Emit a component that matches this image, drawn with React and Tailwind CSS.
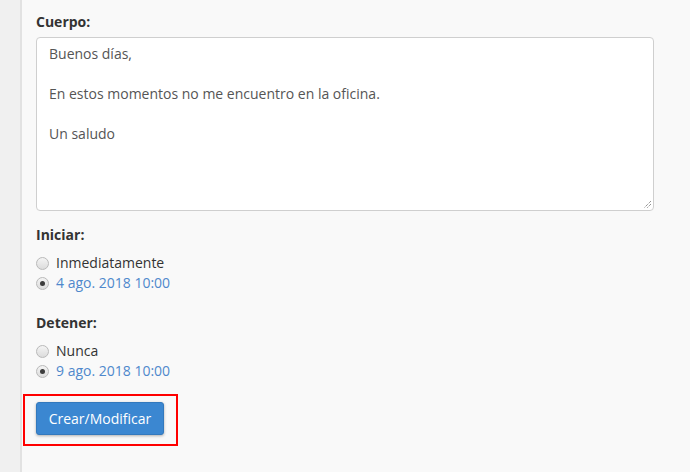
import React from 'react';

function Radio({ checked }) {
  return (
    <span className="inline-flex w-[13px] h-[13px] rounded-full border border-[#b9b9b9] bg-gradient-to-b from-[#f4f4f4] to-[#dcdcdc] items-center justify-center shrink-0">
      {checked && <span className="w-[5px] h-[5px] rounded-full bg-[#3c3c3c]" />}
    </span>
  );
}

function Option({ label, checked, link }) {
  return (
    <label className="flex items-center h-[20px] gap-[7px]">
      <Radio checked={checked} />
      <span className={link ? 'text-[#4f88cc]' : 'text-[#333]'}>{label}</span>
    </label>
  );
}

export default function App() {
  return (
    <div
      className="flex min-h-[472px] w-[690px] bg-[#f9f9f9] text-[14px] leading-[20px] text-[#333]"
      style={{ fontFamily: '"Open Sans", "Liberation Sans", sans-serif' }}
    >
      <div className="w-[22px] shrink-0 bg-[#f0f0f0] border-r-2 border-[#e2e2e2]" />
      <div className="pl-[14px] pt-[12px] flex flex-col">
        <div className="font-bold mb-[5px]">Cuerpo:</div>
        <div className="w-[618px] h-[174px] bg-white border border-[#cfcfcf] rounded-[4px] px-[12px] py-[6px] text-[#555] relative">
          <div>Buenos días,</div>
          <div>&nbsp;</div>
          <div>En estos momentos no me encuentro en la oficina.</div>
          <div>&nbsp;</div>
          <div>Un saludo</div>
          <svg className="absolute right-[1px] bottom-[1px]" width="10" height="10" viewBox="0 0 10 10">
            <path d="M9 2 L2 9 M9 5 L5 9" stroke="#666" strokeWidth="1" strokeDasharray="1 1" />
          </svg>
        </div>

        <div className="font-bold mt-[14px]">Iniciar:</div>
        <div className="mt-[8px]">
          <Option label="Inmediatamente" />
          <Option label="4 ago. 2018 10:00" checked link />
        </div>

        <div className="font-bold mt-[20px]">Detener:</div>
        <div className="mt-[8px]">
          <Option label="Nunca" />
          <Option label="9 ago. 2018 10:00" checked link />
        </div>

        <div className="self-start ml-[-13px] mt-[13px] border-2 border-[#ff0000] pl-[11px] pr-[12px] pt-[6px] pb-[9px]">
          <button className="h-[33px] w-[128px] rounded-[3px] bg-[#3b87d1] border border-[#3379bd] text-white shadow-[0_1px_3px_rgba(0,0,0,0.3)]">
            Crear/Modificar
          </button>
        </div>
      </div>
    </div>
  );
}
